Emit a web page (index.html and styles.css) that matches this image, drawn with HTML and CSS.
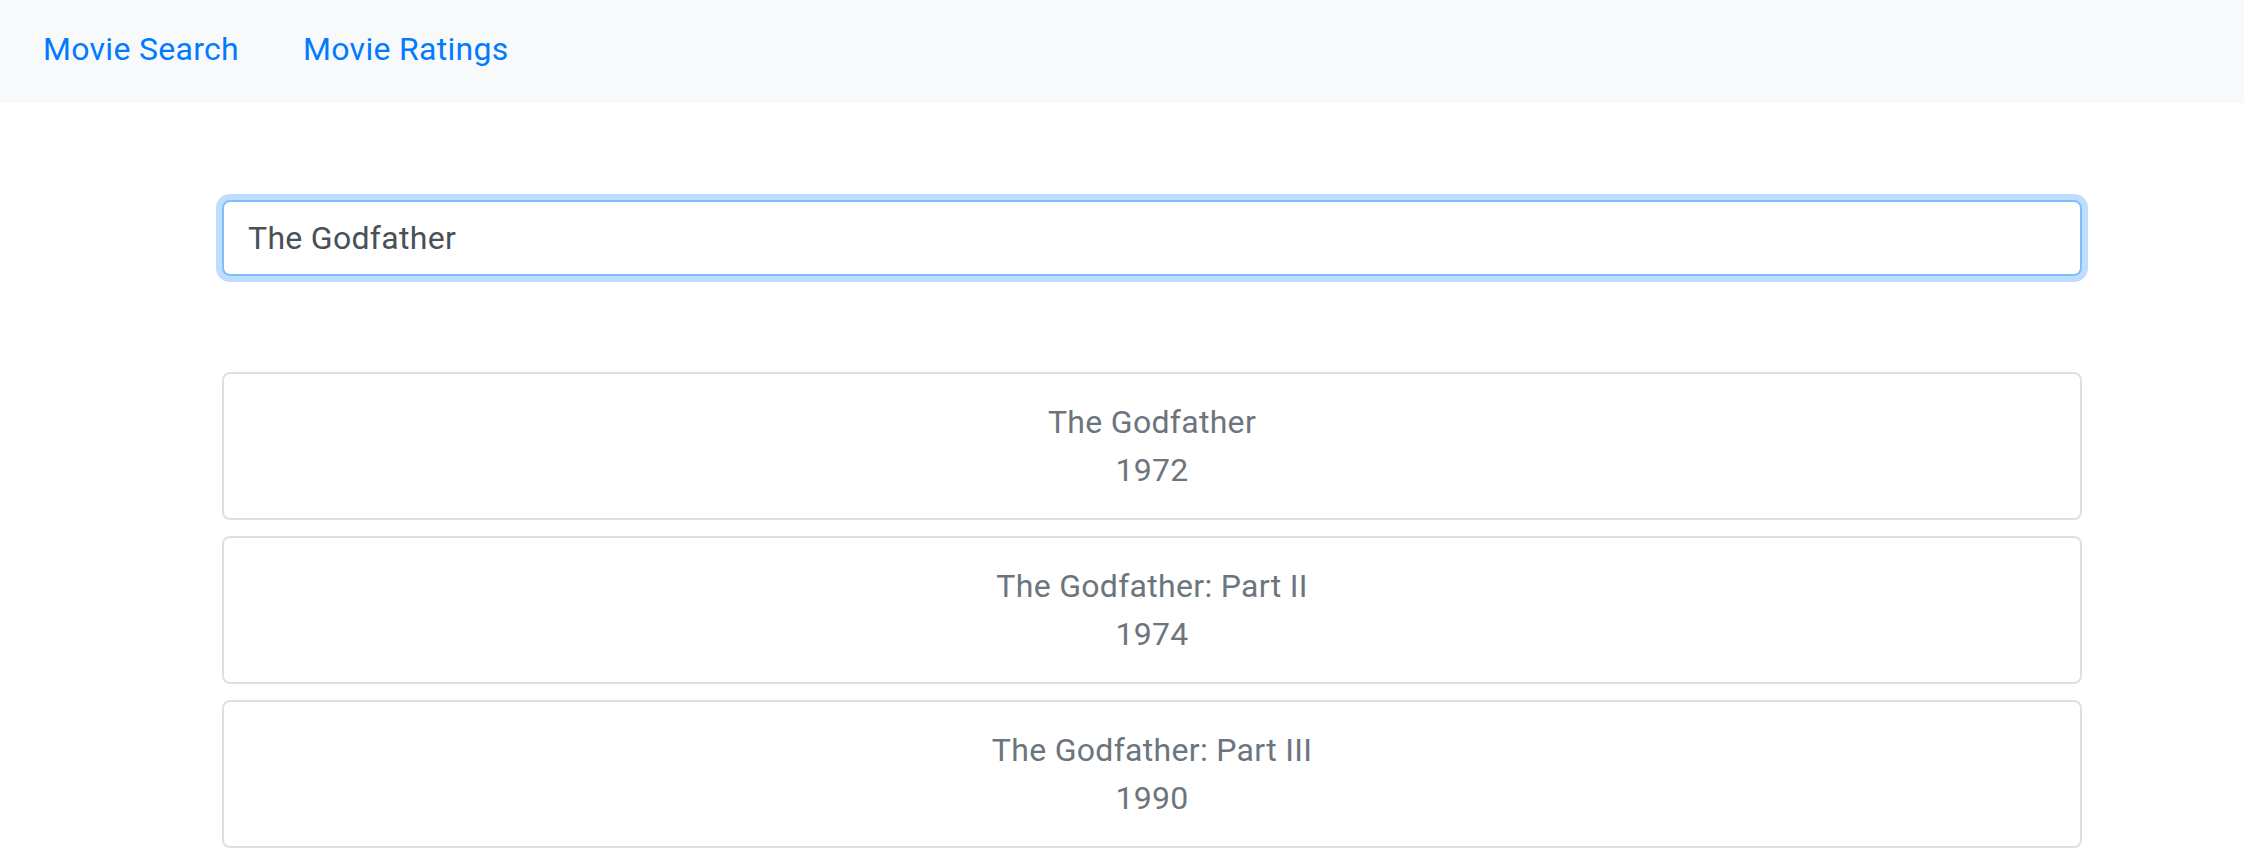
FILE: index.html
```html
<!DOCTYPE html>
<html lang="en">
<head>
<meta charset="utf-8">
<title>Movie Search</title>
<link rel="stylesheet" href="styles.css">
</head>
<body>
<nav class="navbar">
  <a class="nav-link" href="#">Movie Search</a>
  <a class="nav-link" href="#">Movie Ratings</a>
</nav>
<main class="content">
  <div class="search">
    <input class="search-input" type="text" value="The Godfather">
  </div>
  <ul class="results">
    <li class="card"><span>The Godfather</span><span>1972</span></li>
    <li class="card"><span>The Godfather: Part II</span><span>1974</span></li>
    <li class="card"><span>The Godfather: Part III</span><span>1990</span></li>
  </ul>
</main>
</body>
</html>
```

FILE: styles.css
```css
* { box-sizing: border-box; }
html, body { margin: 0; padding: 0; }
body {
  font-family: Roboto, "Liberation Sans", Arial, sans-serif;
  font-size: 32px;
  line-height: 48px;
  letter-spacing: 0.3px;
  color: #212529;
  background: #ffffff;
}
.navbar {
  height: 103px;
  background: #f8f9fa;
  display: flex;
  align-items: center;
  gap: 64px;
  padding: 0 0 6px 43px;
}
.nav-link {
  color: #007bff;
  text-decoration: none;
  font-size: 32px;
}
.content {
  padding: 97px 162px 0 222px;
}
.search {
  margin-bottom: 96px;
}
.search-input {
  display: block;
  width: 100%;
  height: 76px;
  padding: 12px 24px;
  font-family: inherit;
  font-size: 32px;
  letter-spacing: 0.3px;
  color: #495057;
  background: #fff;
  border: 2px solid #80bdff;
  border-radius: 8px;
  box-shadow: 0 0 0 6px rgba(0, 123, 255, 0.25);
  outline: none;
}
.results {
  list-style: none;
  margin: 0;
  padding: 0;
  display: flex;
  flex-direction: column;
  gap: 16px;
}
.card {
  display: flex;
  flex-direction: column;
  align-items: center;
  padding: 24px;
  border: 2px solid rgba(0, 0, 0, 0.125);
  border-radius: 8px;
  color: #6c757d;
  text-align: center;
}
```
